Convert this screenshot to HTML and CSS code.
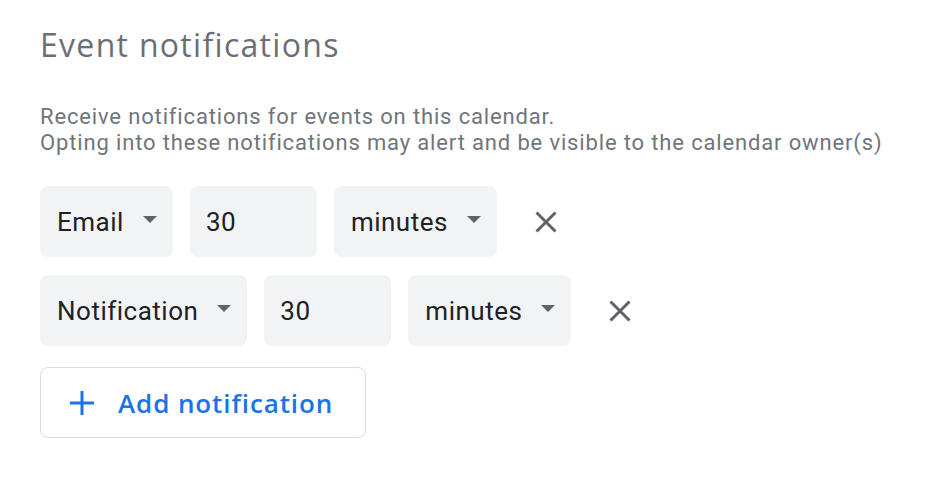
FILE: index.html
```html
<!DOCTYPE html>
<html lang="en">
<head>
    <meta charset="UTF-8">
    <meta name="viewport" content="width=device-width, initial-scale=1.0">
    <title>Event notifications</title>
    <link rel="stylesheet" href="styles.css">
</head>
<body>
    <div class="section">
        <h2 class="title">Event notifications</h2>
        <p class="desc">
            Receive notifications for events on this calendar.<br>
            Opting into these notifications may alert and be visible to the calendar owner(s)
        </p>

        <div class="rows">
            <div class="row">
                <div class="field select">
                    <span>Email</span>
                    <span class="caret"></span>
                </div>
                <div class="field number">30</div>
                <div class="field select">
                    <span>minutes</span>
                    <span class="caret"></span>
                </div>
                <button class="remove" title="Remove">
                    <svg viewBox="0 0 22 22"><path d="M1.5 1.5 20.5 20.5M20.5 1.5 1.5 20.5"/></svg>
                </button>
            </div>
            <div class="row">
                <div class="field select">
                    <span>Notification</span>
                    <span class="caret"></span>
                </div>
                <div class="field number">30</div>
                <div class="field select">
                    <span>minutes</span>
                    <span class="caret"></span>
                </div>
                <button class="remove" title="Remove">
                    <svg viewBox="0 0 22 22"><path d="M1.5 1.5 20.5 20.5M20.5 1.5 1.5 20.5"/></svg>
                </button>
            </div>
        </div>

        <button class="add">
            <svg viewBox="0 0 24 24"><path d="M12 0v24M0 12h24"/></svg>
            <span>Add notification</span>
        </button>
    </div>
</body>
</html>
```

FILE: styles.css
```css
body {
    margin: 0;
    background-color: #fff;
    font-family: Roboto, "Liberation Sans", Arial, sans-serif;
}
.section {
    padding: 26px 40px 0 40px;
}
.title {
    margin: 0;
    font-family: "Open Sans", Roboto, sans-serif;
    font-size: 32px;
    line-height: 38px;
    letter-spacing: 1.3px;
    font-weight: 400;
    color: #6b6f74;
}
.desc {
    margin: 40px 0 0 0;
    font-size: 22px;
    line-height: 26px;
    letter-spacing: 0.85px;
    color: #70757a;
}
.rows {
    margin-top: 30px;
    display: flex;
    flex-direction: column;
    gap: 18px;
}
.row {
    display: flex;
    align-items: center;
    gap: 17px;
}
.field {
    height: 71px;
    box-sizing: border-box;
    background-color: #f1f3f4;
    border-radius: 8px;
    display: flex;
    align-items: center;
    font-size: 26px;
    letter-spacing: 0.5px;
    color: #202124;
}
.select {
    padding: 0 16px 0 17px;
}
.number {
    width: 127px;
    padding-left: 16px;
}
.caret {
    margin-left: 19px;
    width: 0;
    height: 0;
    border-left: 7px solid transparent;
    border-right: 7px solid transparent;
    border-top: 7px solid #5f6368;
    margin-top: -4px;
}
.remove {
    margin-left: 21px;
    background: none;
    border: none;
    padding: 0;
    cursor: pointer;
    display: flex;
}
.remove svg {
    width: 22px;
    height: 22px;
    fill: none;
    stroke: #5f6368;
    stroke-width: 3;
}
.add {
    margin-top: 21px;
    height: 71px;
    width: 326px;
    box-sizing: border-box;
    background: #fff;
    border: 1px solid #dadce0;
    border-radius: 8px;
    display: flex;
    align-items: center;
    gap: 24px;
    padding: 0 0 0 29px;
    font-family: "Open Sans", Roboto, sans-serif;
    font-size: 26px;
    font-weight: 600;
    letter-spacing: 0.9px;
    color: #1a73e8;
    cursor: pointer;
}
.add svg {
    width: 24px;
    height: 24px;
    fill: none;
    stroke: #1a73e8;
    stroke-width: 3;
}
```
